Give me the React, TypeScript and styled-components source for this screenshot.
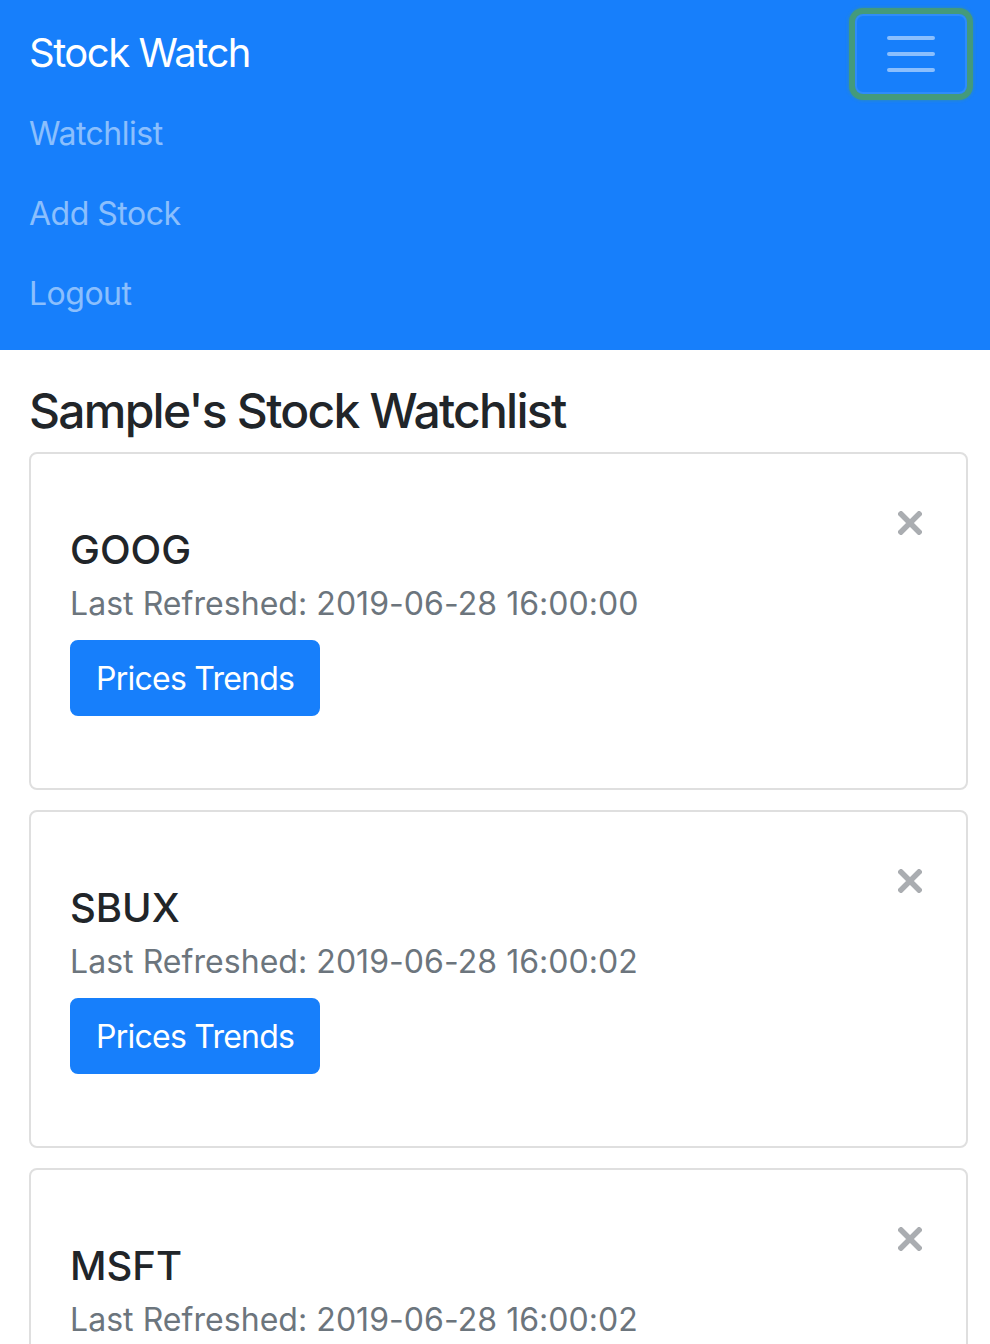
import * as React from 'react';
import styled, { createGlobalStyle } from 'styled-components';

const GlobalStyle = createGlobalStyle`
  body {
    margin: 0;
    background: #fff;
    font-family: Inter, "Liberation Sans", Arial, sans-serif;
    color: #212529;
  }
`;

const Navbar = styled.nav`
  background: #177ffb;
  padding: 14px 22px 16px 29px;
`;

const NavTop = styled.div`
  display: flex;
  align-items: center;
  justify-content: space-between;
  height: 80px;
`;

const Brand = styled.a`
  color: #fff;
  font-size: 40px;
  line-height: 60px;
  margin-top: -2px;
  letter-spacing: -1.5px;
  text-decoration: none;
`;

const Toggler = styled.button`
  width: 112px;
  height: 80px;
  padding: 0;
  display: flex;
  align-items: center;
  justify-content: center;
  background: transparent;
  border: 2px solid rgba(255, 255, 255, 0.1);
  border-radius: 8px;
  box-shadow: 0 0 0 6px rgba(78, 160, 96, 0.75), 0 0 3px 7px rgba(78, 160, 96, 0.3);
  margin-right: 1px;
`;

const NavList = styled.ul`
  list-style: none;
  margin: 0;
  padding: 0;
`;

const NavLink = styled.a`
  display: block;
  padding: 16px 0;
  font-size: 32px;
  line-height: 48px;
  letter-spacing: -0.5px;
  color: rgba(255, 255, 255, 0.5);
  text-decoration: none;
`;

const Main = styled.main`
  padding: 0 22px 0 29px;
`;

const Title = styled.h4`
  margin: 32px 0 12px;
  font-size: 48px;
  line-height: 58px;
  font-weight: 500;
  letter-spacing: -1.75px;
`;

const CardList = styled.div`
  display: flex;
  flex-direction: column;
  gap: 20px;
`;

const Card = styled.div`
  border: 2px solid #dfdfdf;
  border-radius: 8px;
  padding: 57px 44px 72px 39px;
  display: flex;
  justify-content: space-between;
  align-items: flex-start;
`;

const CardContent = styled.div`
  display: flex;
  flex-direction: column;
  align-items: flex-start;
  padding-top: 15px;
`;

const Symbol = styled.h5`
  margin: 0;
  font-size: 40px;
  line-height: 48px;
  font-weight: 500;
  color: #212529;
`;

const Refreshed = styled.p`
  margin: 6px 0 0;
  font-size: 32px;
  line-height: 48px;
  color: #6c757d;
  letter-spacing: 0.05px;
`;

const TrendButton = styled.button`
  margin-top: 12px;
  height: 76px;
  padding: 0 24px;
  font-family: inherit;
  font-size: 32px;
  color: #fff;
  background: #177ffb;
  border: 2px solid #177ffb;
  border-radius: 8px;
  letter-spacing: -0.75px;
`;

const CloseButton = styled.button`
  width: 24px;
  height: 24px;
  padding: 0;
  border: 0;
  background: transparent;
  display: flex;
`;

const MenuIcon = () => (
  <svg width="60" height="60" viewBox="0 0 30 30">
    <path
      d="M4 7h22M4 15h22M4 23h22"
      stroke="rgba(255,255,255,0.5)"
      strokeWidth="2"
      strokeLinecap="round"
      fill="none"
    />
  </svg>
);

const CloseIcon = () => (
  <svg width="24" height="24" viewBox="0 0 24 24">
    <path d="M3 3L21 21M21 3L3 21" stroke="#aaadb1" strokeWidth="5.5" strokeLinecap="square" />
  </svg>
);

const stocks = [
  { symbol: 'GOOG', refreshed: '2019-06-28 16:00:00' },
  { symbol: 'SBUX', refreshed: '2019-06-28 16:00:02' },
  { symbol: 'MSFT', refreshed: '2019-06-28 16:00:02' },
];

export default function App() {
  return (
    <>
      <GlobalStyle />
      <Navbar>
        <NavTop>
          <Brand href="#">Stock Watch</Brand>
          <Toggler aria-label="Toggle navigation">
            <MenuIcon />
          </Toggler>
        </NavTop>
        <NavList>
          <li><NavLink href="#">Watchlist</NavLink></li>
          <li><NavLink href="#">Add Stock</NavLink></li>
          <li><NavLink href="#">Logout</NavLink></li>
        </NavList>
      </Navbar>
      <Main>
        <Title>Sample's Stock Watchlist</Title>
        <CardList>
          {stocks.map(s => (
            <Card key={s.symbol}>
              <CardContent>
                <Symbol>{s.symbol}</Symbol>
                <Refreshed>Last Refreshed: {s.refreshed}</Refreshed>
                <TrendButton>Prices Trends</TrendButton>
              </CardContent>
              <CloseButton aria-label="Remove">
                <CloseIcon />
              </CloseButton>
            </Card>
          ))}
        </CardList>
      </Main>
    </>
  );
}
